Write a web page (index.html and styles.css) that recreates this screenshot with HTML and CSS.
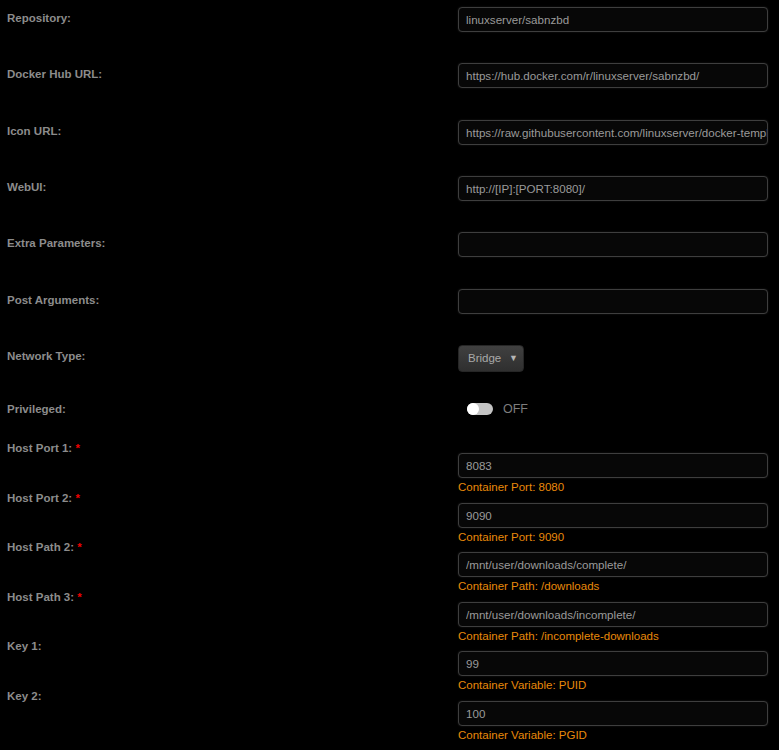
FILE: index.html
```html
<!DOCTYPE html>
<html>
  <head>
  <meta charset='utf-8'>
  <link rel="stylesheet" href="styles.css">
  </head>

  <body>
  <div class="form">
    <div class="row">
      <div class="label">Repository:</div>
      <div class="field"><input type="text" value="linuxserver/sabnzbd"></div>
    </div>
    <div class="row">
      <div class="label">Docker Hub URL:</div>
      <div class="field"><input type="text" value="https://hub.docker.com/r/linuxserver/sabnzbd/"></div>
    </div>
    <div class="row">
      <div class="label">Icon URL:</div>
      <div class="field"><input type="text" value="https://raw.githubusercontent.com/linuxserver/docker-templates/master/linuxserver.io/img/sabnzbd-icon.png"></div>
    </div>
    <div class="row">
      <div class="label">WebUI:</div>
      <div class="field"><input type="text" value="http://[IP]:[PORT:8080]/"></div>
    </div>
    <div class="row">
      <div class="label">Extra Parameters:</div>
      <div class="field"><input type="text" value=""></div>
    </div>
    <div class="row">
      <div class="label">Post Arguments:</div>
      <div class="field"><input type="text" value=""></div>
    </div>
    <div class="row row-select">
      <div class="label">Network Type:</div>
      <div class="field">
        <span class="select-wrap">
          <select>
            <option>Bridge</option>
            <option>Host</option>
            <option>None</option>
          </select>
          <span class="arrow">&#9660;</span>
        </span>
      </div>
    </div>
    <div class="row row-check">
      <div class="label">Privileged:</div>
      <div class="field">
        <span class="switch"><span class="knob"></span></span>
        <span class="switch-text">OFF</span>
      </div>
    </div>

    <div class="row row-port">
      <div class="label">Host Port 1: <span class="req">*</span></div>
      <div class="field">
        <input type="text" value="8083">
        <div class="desc">Container Port: 8080</div>
      </div>
    </div>
    <div class="row row-port">
      <div class="label">Host Port 2: <span class="req">*</span></div>
      <div class="field">
        <input type="text" value="9090">
        <div class="desc">Container Port: 9090</div>
      </div>
    </div>
    <div class="row row-port">
      <div class="label">Host Path 2: <span class="req">*</span></div>
      <div class="field">
        <input type="text" value="/mnt/user/downloads/complete/">
        <div class="desc">Container Path: /downloads</div>
      </div>
    </div>
    <div class="row row-port">
      <div class="label">Host Path 3: <span class="req">*</span></div>
      <div class="field">
        <input type="text" value="/mnt/user/downloads/incomplete/">
        <div class="desc">Container Path: /incomplete-downloads</div>
      </div>
    </div>
    <div class="row row-port">
      <div class="label">Key 1:</div>
      <div class="field">
        <input type="text" value="99">
        <div class="desc">Container Variable: PUID</div>
      </div>
    </div>
    <div class="row row-port">
      <div class="label">Key 2:</div>
      <div class="field">
        <input type="text" value="100">
        <div class="desc">Container Variable: PGID</div>
      </div>
    </div>
  </div>
  </body>
</html>
```

FILE: styles.css
```css
body {
  margin: 0;
  background: #000;
  font-family: "Liberation Sans", Arial, sans-serif;
  font-size: 11.5px;
  overflow: hidden;
}

.form {
  padding: 7px 0 0 7px;
}

.row {
  display: flex;
  align-items: flex-start;
  height: 56.33px;
}

.label {
  width: 451px;
  flex: none;
  margin-top: 4px;
  line-height: 14px;
  font-weight: bold;
  color: #8c8c8c;
}

.req {
  color: #e00;
}

.field {
  width: 310px;
  flex: none;
}

input {
  box-sizing: border-box;
  display: block;
  width: 310px;
  height: 25px;
  margin: 0;
  padding: 0 0 0 7px;
  background: #070707;
  border: 1px solid #3e3e3e;
  border-radius: 4px;
  box-shadow: 0 0 2px #1e1e1e;
  color: #9a9a9a;
  font-family: "Liberation Sans", Arial, sans-serif;
  font-size: 11.6px;
  outline: none;
}

.row-select {
  height: 53px;
}

.select-wrap {
  position: relative;
  display: inline-block;
}

select {
  appearance: none;
  -webkit-appearance: none;
  display: block;
  width: 66px;
  height: 27px;
  margin: 0;
  padding: 0 0 0 9px;
  border: 1px solid #262626;
  border-radius: 4px;
  background: linear-gradient(#404040, #2f2f2f);
  color: #a9a9a9;
  font-family: "Liberation Sans", Arial, sans-serif;
  font-size: 11.5px;
  outline: none;
}

.arrow {
  position: absolute;
  right: 6px;
  top: 8px;
  font-size: 9px;
  color: #b5b5b5;
  pointer-events: none;
}

.row-check {
  height: 43px;
}

.row-check .field {
  display: flex;
  align-items: center;
  height: 22px;
  padding-left: 9px;
  box-sizing: border-box;
}

.switch {
  display: inline-block;
  width: 26px;
  height: 12px;
  border-radius: 6px;
  background: #c4c4c4;
  position: relative;
}

.knob {
  position: absolute;
  left: 0;
  top: 0;
  width: 12px;
  height: 12px;
  border-radius: 6px;
  background: #fff;
}

.switch-text {
  margin-left: 10px;
  font-size: 12.5px;
  color: #7d7d7d;
}

.row-port {
  height: 49.6px;
}

.row-port .label {
  margin-top: 0;
}

.row-port .field {
  margin-top: 12px;
}

.desc {
  margin-top: 2px;
  line-height: 14px;
  color: #e8890a;
}
```
